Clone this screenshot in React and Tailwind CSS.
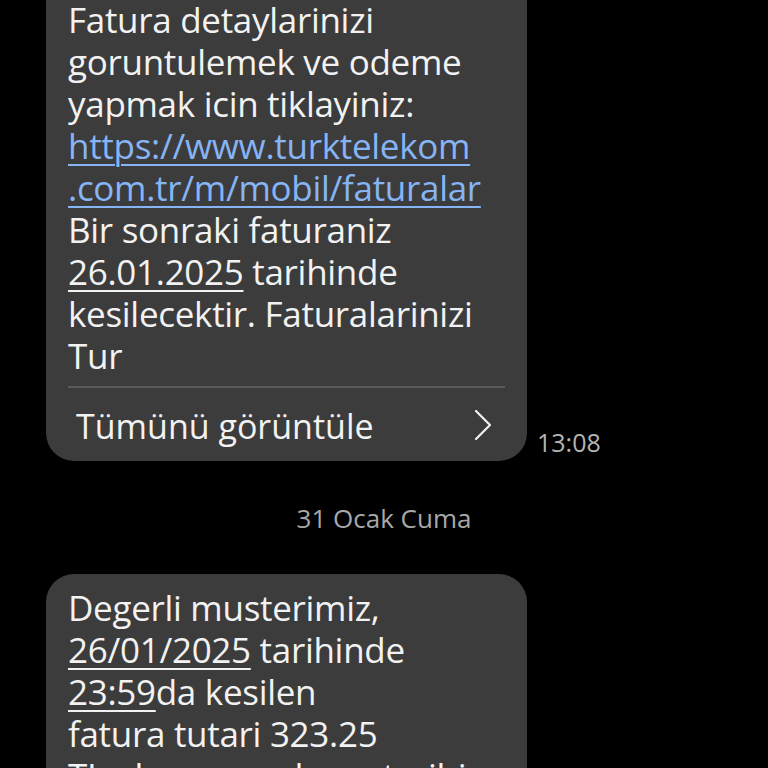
export default function App() {
  return (
    <div className="w-[768px] h-[768px] overflow-hidden bg-black text-[#f2f2f2]" style={{ fontFamily: '"Open Sans", "Noto Sans", sans-serif' }}>
      <div className="flex flex-col items-start pl-[46px]">
        {/* first message, scrolled partly out of view */}
        <div className="flex items-end gap-[10px] -mt-[40px]">
          <div className="w-[481px] rounded-[28px] bg-[#3c3c3c] pt-[39px] pb-[3px] px-[22px]">
            <p className="text-[35px] leading-[42px] font-medium tracking-[-0.3px]">
              Fatura detaylarinizi goruntulemek ve odeme yapmak icin tiklayiniz:{" "}
              <span className="text-[#86b4f5] underline decoration-[#86b4f5] decoration-[2px] underline-offset-[5px]">
                https://www.turktelekom .com.tr/m/mobil/faturalar
              </span>{" "}
              Bir sonraki faturaniz{" "}
              <span className="underline decoration-[2px] underline-offset-[5px]">26.01.2025</span>{" "}
              tarihinde kesilecektir. Faturalarinizi Tur
            </p>
            <div className="mt-[9px] h-[2px] bg-[#5a5a5a]" />
            <div className="mt-[4px] flex items-center justify-between pl-[8px] pr-[12px] h-[66px]">
              <span className="text-[34px] font-medium pt-[3px]">Tümünü görüntüle</span>
              <svg width="20" height="32" viewBox="0 0 20 32" fill="none" stroke="#f2f2f2" strokeWidth="2.2" strokeLinecap="round" strokeLinejoin="round">
                <path d="M3 2 L17 16 L3 30" />
              </svg>
            </div>
          </div>
          <span className="text-[25px] leading-none text-[#b4b4b4] pb-[6px]">13:08</span>
        </div>
      </div>

      <div className="flex justify-center pt-[42px] pb-[41px]">
        <span className="text-[26px] leading-[30px] text-[#a8a8a8]">31 Ocak Cuma</span>
      </div>

      <div className="pl-[46px]">
        <div className="w-[481px] rounded-[28px] bg-[#3c3c3c] pt-[13px] pb-[20px] px-[22px]">
          <p className="text-[35px] leading-[42px] font-medium tracking-[-0.3px]">
            Degerli musterimiz,
            <br />
            <span className="underline decoration-[2px] underline-offset-[5px]">26/01/2025</span> tarihinde
            <br />
            <span className="underline decoration-[2px] underline-offset-[5px]">23:59</span>da kesilen
            <br />
            fatura tutari 323.25
            <br />
            TL olup son odeme tarihi
          </p>
        </div>
      </div>
    </div>
  );
}
